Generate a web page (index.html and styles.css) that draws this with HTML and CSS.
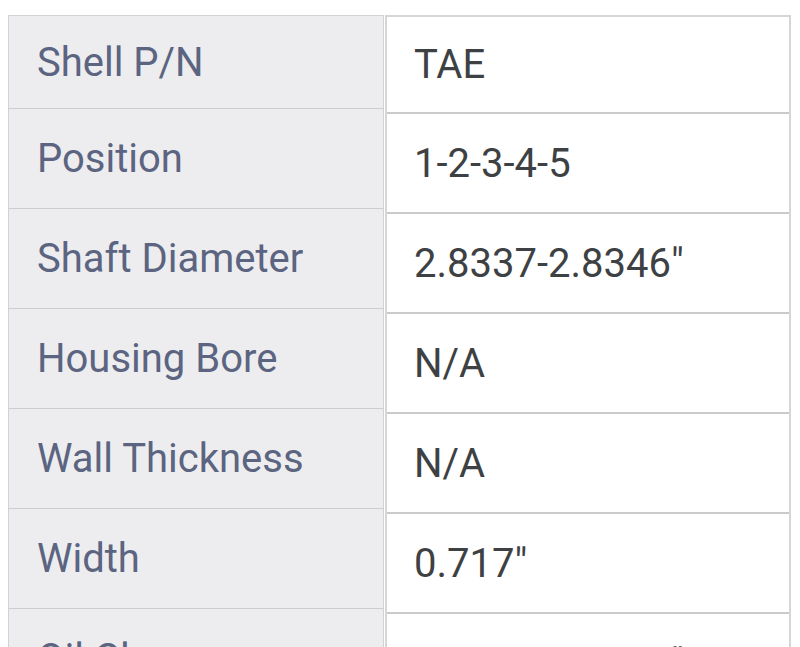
FILE: index.html
```html
<!DOCTYPE html>
<html lang="en">
<head>
<meta charset="utf-8">
<title>Seal specifications</title>
<link rel="stylesheet" href="styles.css">
</head>
<body>
<div class="specs">
  <div class="col labels">
    <div class="cell first">Shell P/N</div>
    <div class="cell">Position</div>
    <div class="cell">Shaft Diameter</div>
    <div class="cell">Housing Bore</div>
    <div class="cell">Wall Thickness</div>
    <div class="cell">Width</div>
    <div class="cell">Oil Clearance</div>
  </div>
  <div class="col values">
    <div class="cell first">TAE</div>
    <div class="cell">1-2-3-4-5</div>
    <div class="cell">2.8337-2.8346"</div>
    <div class="cell">N/A</div>
    <div class="cell">N/A</div>
    <div class="cell">0.717"</div>
    <div class="cell">0.0030-0.0047"</div>
  </div>
</div>
</body>
</html>
```
FILE: styles.css
```css
html, body {
  margin: 0;
  padding: 0;
  background: #ffffff;
}
body {
  font-family: Roboto, "Noto Sans", sans-serif;
  font-size: 40px;
  overflow: hidden;
}
.specs {
  display: flex;
  gap: 1px;
  padding: 15px 0 0 8px;
  align-items: flex-start;
}
.col {
  display: flex;
  flex-direction: column;
  box-sizing: border-box;
}
.cell {
  display: flex;
  align-items: center;
  box-sizing: border-box;
  height: 100px;
  white-space: nowrap;
}
.labels {
  width: 376px;
  background: #ededef;
  border: 1px solid #d2d2d6;
  color: #5b6480;
}
.labels .cell {
  padding-left: 28px;
  border-bottom: 1px solid #cdcdd1;
}
.labels .cell.first {
  height: 93px;
}
.values {
  width: 406px;
  background: #ffffff;
  border: 2px solid #d6d6d8;
  color: #3e4143;
}
.values .cell {
  padding-left: 27px;
  border-bottom: 2px solid #cbcbcd;
}
.values .cell.first {
  height: 97px;
}
```
